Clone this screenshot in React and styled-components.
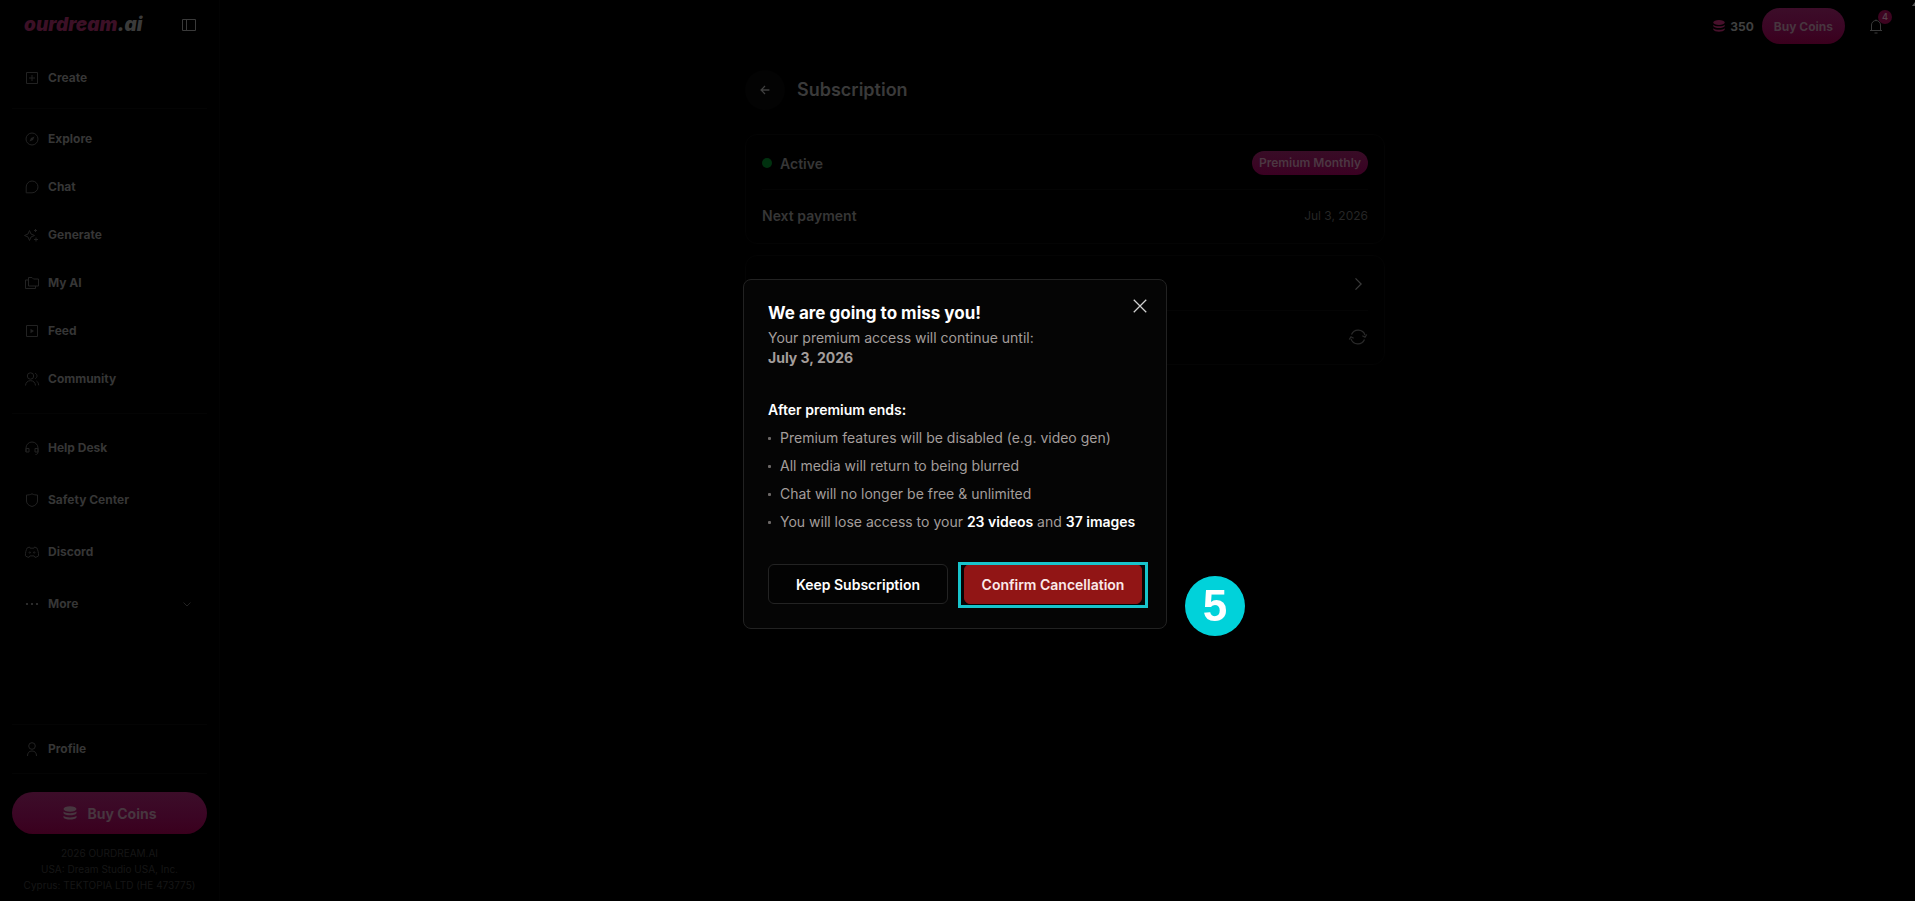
import React from 'react';
import styled, { createGlobalStyle } from 'styled-components';

const GlobalStyle = createGlobalStyle`
  * {
    box-sizing: border-box;
  }

  body {
    margin: 0;
    background: #000;
    color: #363636;
    font-family: Inter, "Liberation Sans", sans-serif;
    font-size: 14px;
  }

  button {
    font-family: inherit;
    cursor: pointer;
  }

  h1, h2, h3, p, ul {
    margin: 0;
    padding: 0;
  }
`;

const Layout = styled.div`
  display: grid;
  grid-template-columns: 220px minmax(0, 1fr);
  min-height: 100vh;
`;

const Sidebar = styled.aside`
  display: flex;
  flex-direction: column;
  padding: 0 12px 8px;
  border-right: 1px solid #030303;
`;

const SidebarHeader = styled.div`
  display: flex;
  align-items: center;
  justify-content: space-between;
  height: 50px;
  padding: 0 10px 0 12px;
  margin-bottom: 8px;
`;

const Logo = styled.a`
  color: #3a3a3a;
  font-size: 19px;
  font-style: italic;
  font-weight: 900;
  line-height: 20px;
  text-decoration: none;

  span {
    color: #3c1026;
  }
`;

const IconButton = styled.button`
  display: flex;
  padding: 0;
  border: 0;
  background: none;
  color: ${(props) => props.$color || '#3a3a3a'};
`;

const NavGroup = styled.nav`
  display: flex;
  flex-direction: column;
  gap: ${(props) => props.$gap || 8}px;
`;

const NavItem = styled.a`
  display: flex;
  align-items: center;
  gap: 8px;
  height: 40px;
  padding: 0 12px;
  color: #363636;
  font-size: 12px;
  font-weight: 700;
  line-height: 16px;
  text-decoration: none;

  svg {
    color: #222;
  }

  svg:last-child {
    margin-left: auto;
  }
`;

const Divider = styled.hr`
  width: 100%;
  height: 1px;
  margin: ${(props) => props.$space || 4}px 0;
  border: 0;
  background: #040404;
`;

const SidebarFooter = styled.div`
  display: flex;
  flex-direction: column;
  margin-top: auto;
`;

const PinkButton = styled.button`
  display: flex;
  align-items: center;
  justify-content: center;
  gap: 9px;
  height: ${(props) => (props.$large ? 42 : 36)}px;
  padding: 0 12px;
  border: 0;
  border-radius: 21px;
  background: linear-gradient(#3c0d29, #3b0524 60%, #3a001d);
  color: #47363f;
  font-size: ${(props) => (props.$large ? 14 : 12)}px;
  font-weight: 700;
`;

const Company = styled.p`
  && {
    margin-top: 11px;
  }
  color: #161616;
  font-size: 10px;
  line-height: 16px;
  text-align: center;
`;

const BuyWrap = styled.div`
  display: grid;
  margin-top: 14px;
`;

const Main = styled.main`
  display: flex;
  flex-direction: column;
  padding-right: 5px;
`;

const TopBar = styled.header`
  display: flex;
  align-items: center;
  justify-content: flex-end;
  height: 52px;
  padding: 0 26px 0 0;
`;

const Balance = styled.div`
  display: flex;
  align-items: center;
  gap: 4px;
  margin-right: 8px;
  color: #404040;
  font-size: 12px;
  font-weight: 700;

  svg {
    color: #47102b;
  }
`;

const BellWrap = styled.div`
  position: relative;
  margin-left: 23px;
`;

const BellCount = styled.span`
  position: absolute;
  top: -8px;
  right: -8px;
  width: 14px;
  height: 14px;
  border-radius: 50%;
  background: #3d0420;
  color: #56404a;
  font-size: 9px;
  font-weight: 600;
  line-height: 14px;
  text-align: center;
`;

const Content = styled.div`
  width: 100%;
  max-width: 640px;
  margin: 18px auto 0;
`;

const PageHeader = styled.div`
  display: flex;
  align-items: center;
  gap: 12px;
  margin-bottom: 24px;
`;

const BackButton = styled.button`
  display: grid;
  place-items: center;
  width: 40px;
  height: 40px;
  border: 0;
  border-radius: 50%;
  background: #030303;
  color: #404040;
`;

const PageTitle = styled.h1`
  color: #3a3a3a;
  font-size: 18px;
  font-weight: 600;
  line-height: 24px;
`;

const Card = styled.section`
  margin-bottom: 11px;
  padding: 2px 16px;
  border: 1px solid #040404;
  border-radius: 12px;
`;

const Row = styled.div`
  display: flex;
  align-items: center;
  gap: 8px;
  height: 52px;
  color: #363636;
  font-weight: 600;

  & + & {
    border-top: 1px solid #040404;
  }

  > :last-child {
    margin-left: auto;
  }
`;

const StatusDot = styled.span`
  width: 10px;
  height: 10px;
  border-radius: 50%;
  background: #00310f;
`;

const Badge = styled.span`
  padding: 0 7px;
  border-radius: 12px;
  background: linear-gradient(#380c26, #3a0022);
  color: #4c3742;
  font-size: 12px;
  font-weight: 600;
  line-height: 24px;
`;

const RowValue = styled.span`
  color: #262626;
  font-size: 12px;
  font-weight: 400;
`;

const Overlay = styled.div`
  position: fixed;
  inset: 0;
  display: grid;
  place-items: center;
  padding: 7px 5px 0 0;
`;

const Dialog = styled.div`
  position: relative;
  width: 424px;
  padding: 24px;
  border: 1px solid #222;
  border-radius: 8px;
  background: #050505;
  color: #a39d9b;
  line-height: 20px;
`;

const DialogTitle = styled.h2`
  margin-bottom: 6px;
  color: #fff;
  font-size: 17px;
  font-weight: 700;
  line-height: 18px;
`;

const CloseButton = styled(IconButton)`
  position: absolute;
  top: 16px;
  right: 16px;
`;

const ListTitle = styled.h3`
  && {
    margin: 32px 0 8px;
  }
  color: #fff;
  font-size: 14px;
  font-weight: 600;
`;

const Consequences = styled.ul`
  display: flex;
  flex-direction: column;
  gap: 8px;
  list-style: none;
`;

const Consequence = styled.li`
  display: flex;
  align-items: center;
  gap: 9px;

  &::before {
    content: "";
    width: 3px;
    height: 3px;
    border-radius: 1px;
    background: #6b6766;
  }

  strong {
    color: #fff;
    font-weight: 600;
  }
`;

const Actions = styled.div`
  display: grid;
  grid-template-columns: 1fr 1fr;
  gap: 14px;
  margin-top: 32px;
`;

const ActionButton = styled.button`
  width: 100%;
  height: 40px;
  padding: 0;
  border: 1px solid ${(props) => (props.$danger ? '#911515' : '#232323')};
  border-radius: 6px;
  background: ${(props) => (props.$danger ? '#911515' : '#030303')};
  color: ${(props) => (props.$danger ? '#fbe9e9' : '#fff')};
  font-size: 14px;
  font-weight: 600;
`;

const Highlight = styled.div`
  position: relative;
  padding-left: 2px;

  &::after {
    content: "";
    position: absolute;
    inset: -2px -6px -4px -4px;
    border: 3px solid #18c4cc;
    pointer-events: none;
  }
`;

const StepMarker = styled.span`
  position: absolute;
  top: 296px;
  left: calc(100% + 19px);
  width: 60px;
  height: 60px;
  border-radius: 50%;
  background: #00d2da;
  color: #fff;
  font-family: "Liberation Sans", sans-serif;
  font-size: 44px;
  font-weight: 700;
  line-height: 60px;
  text-align: center;
`;

const ScrollArrow = styled.span`
  position: fixed;
  top: 2px;
  right: -3px;
  border: 3px solid transparent;
  border-top: 0;
  border-bottom: 4px solid #555;
`;

const paths = {
  create: <path d="M2.5 2.5h11v11h-11zM8 5v6M5 8h6" />,
  explore: (
    <>
      <circle cx="8" cy="8" r="6" />
      <path d="M10.500 5.500 9 9 5.500 10.500 7 7z" fill="currentColor" strokeWidth="0" />
    </>
  ),
  chat: <path d="M2.2 13.8V8A5.9 5.9 0 1 1 8 13.8z" />,
  generate: (
    <path d="M5.500 3.500 7 7l3.500 1.500L7 10l-1.500 3.500L4 10 .5 8.500 4 7zM11.500 2v3M10 3.500h3M12 10.500v4M10 12.500h4" />
  ),
  myai: <path d="M4.500 2.500H8L9.500 4h5v7h-10zM4.500 5h-3v8.500h10V11" />,
  feed: (
    <>
      <path d="M2.500 2.500h11v11h-11z" />
      <path d="M6.500 5.800v4.400L10 8z" fill="currentColor" strokeWidth="0" />
    </>
  ),
  community: (
    <>
      <circle cx="6.500" cy="5" r="3.200" />
      <path d="M1.500 14.500c.3-3 2-4.800 5-4.800s4.700 1.800 5 4.800M11 2.200c2.600.8 2.600 4.300.3 5.500M12.500 10c1.300.8 2 2.200 2.200 4.300" />
    </>
  ),
  help: (
    <path d="M2 12V8a6 6 0 0 1 12 0v4M2 8.500h3V12H2zM11 8.500h3V12h-3zM14 12c0 1.500-.8 2.500-2.500 2.500" />
  ),
  shield: <path d="M8 1.800c1.800 1 3.500 1.200 5.500 1.200v6c0 2.800-2.300 4.600-5.500 5.500C4.800 13.600 2.500 11.800 2.500 9V3C4.500 3 6.200 2.800 8 1.800z" />,
  discord: (
    <>
      <path d="M5.500 3 3.200 3.900C2 6 1.400 8.800 1.400 11.800c1 .9 2.300 1.400 3.600 1.600l.9-1.500h4.200l.9 1.500c1.300-.2 2.600-.7 3.600-1.600 0-3-.6-5.800-1.800-7.900L10.500 3l-.6 1.200H6.100z" />
      <circle cx="5.800" cy="8.500" r=".7" />
      <circle cx="10.200" cy="8.500" r=".7" />
    </>
  ),
  more: (
    <g fill="#363636" stroke="none">
      <circle cx="3" cy="8" r="1.100" />
      <circle cx="8" cy="8" r="1.100" />
      <circle cx="13" cy="8" r="1.100" />
    </g>
  ),
  profile: (
    <>
      <circle cx="8" cy="5" r="3.300" />
      <path d="M3.500 15c0-3.200 1.500-5 4.500-5s4.500 1.800 4.500 5" />
    </>
  ),
  panel: <path d="M1.500 2.500h13v11h-13zM5.500 2.500v11" />,
  down: <path d="m4.500 6.500 3.500 3.500 3.500-3.500" />,
  right: <path d="m6 3.500 4.500 4.500L6 12.500" />,
  back: <path d="M13 8H3.500M8 3.500 3.500 8 8 12.500" />,
  close: <path d="m3 3 10 10M13 3 3 13" />,
  refresh: (
    <path d="M2.800 6A5.800 5.800 0 0 1 13.600 6.500M15 6l-1.400 2.200L11.500 7M13.200 10A5.800 5.800 0 0 1 2.400 9.500M1 10l1.400-2.200L4.500 9" />
  ),
  bell: <path d="M2 12.500h12M3.500 12.500V7a4.500 4.500 0 0 1 9 0v5.500M8 2.500v-1M6.500 15h3" />,
  coins: (
    <g fill="currentColor" stroke="none">
      <ellipse cx="8" cy="4" rx="6.500" ry="2.800" />
      <path d="M1.500 6.500c2 2.300 11 2.300 13 0v1.700c-1.500 2.700-11.500 2.700-13 0zM1.500 10.700c2 2.300 11 2.300 13 0v1.700c-1.500 2.800-11.500 2.800-13 0z" />
    </g>
  ),
};

function Icon({ name, size = 16, width = 1 }) {
  return (
    <svg
      width={size}
      height={size}
      viewBox="0 0 16 16"
      fill="none"
      stroke="currentColor"
      strokeWidth={width}
      aria-hidden="true"
    >
      {paths[name]}
    </svg>
  );
}

const mainLinks = [
  ['explore', 'Explore'],
  ['chat', 'Chat'],
  ['generate', 'Generate'],
  ['myai', 'My AI'],
  ['feed', 'Feed'],
  ['community', 'Community'],
];

const helpLinks = [
  ['help', 'Help Desk'],
  ['shield', 'Safety Center'],
  ['discord', 'Discord'],
];

function NavLink({ icon, label, children }) {
  return (
    <NavItem href="#">
      <Icon name={icon} />
      <span>{label}</span>
      {children}
    </NavItem>
  );
}

function App() {
  return (
    <>
      <GlobalStyle />
      <Layout>
        <Sidebar>
          <SidebarHeader>
            <Logo href="#"><span>ourdream</span>.ai</Logo>
            <IconButton aria-label="Collapse sidebar"><Icon name="panel" /></IconButton>
          </SidebarHeader>
          <NavGroup>
            <NavLink icon="create" label="Create" />
          </NavGroup>
          <Divider $space={10} />
          <NavGroup>
            {mainLinks.map(([icon, label]) => (
              <NavLink key={icon} icon={icon} label={label} />
            ))}
          </NavGroup>
          <Divider $space={14} />
          <NavGroup $gap={12}>
            {helpLinks.map(([icon, label]) => (
              <NavLink key={icon} icon={icon} label={label} />
            ))}
            <NavLink icon="more" label="More"><Icon name="down" /></NavLink>
          </NavGroup>
          <SidebarFooter>
            <Divider />
            <NavLink icon="profile" label="Profile" />
            <Divider />
            <BuyWrap>
              <PinkButton $large><Icon name="coins" />Buy Coins</PinkButton>
            </BuyWrap>
            <Company>
              2026 OURDREAM.AI<br />
              USA: Dream Studio USA, Inc.<br />
              Cyprus: TEKTOPIA LTD (HE 473775)
            </Company>
          </SidebarFooter>
        </Sidebar>

        <Main>
          <TopBar>
            <Balance><Icon name="coins" size={14} />350</Balance>
            <PinkButton>Buy Coins</PinkButton>
            <BellWrap>
              <IconButton aria-label="Notifications"><Icon name="bell" /></IconButton>
              <BellCount>4</BellCount>
            </BellWrap>
          </TopBar>
          <Content>
            <PageHeader>
              <BackButton aria-label="Back"><Icon name="back" size={14} width={1.5} /></BackButton>
              <PageTitle>Subscription</PageTitle>
            </PageHeader>
            <Card>
              <Row><StatusDot />Active<Badge>Premium Monthly</Badge></Row>
              <Row>Next payment<RowValue>Jul 3, 2026</RowValue></Row>
            </Card>
            <Card>
              <Row>
                Coin History
                <IconButton aria-label="Open coin history"><Icon name="right" size={20} /></IconButton>
              </Row>
              <Row>
                <IconButton aria-label="Refresh subscription" $color="#2a2a2a"><Icon name="refresh" size={20} /></IconButton>
              </Row>
            </Card>
          </Content>
        </Main>
      </Layout>
      <ScrollArrow />

      <Overlay>
        <Dialog role="dialog" aria-modal="true" aria-labelledby="dialog-title">
          <DialogTitle id="dialog-title">We are going to miss you!</DialogTitle>
          <p>Your premium access will continue until:</p>
          <p><strong>July 3, 2026</strong></p>
          <ListTitle>After premium ends:</ListTitle>
          <Consequences>
            <Consequence>Premium features will be disabled (e.g. video gen)</Consequence>
            <Consequence>All media will return to being blurred</Consequence>
            <Consequence>Chat will no longer be free &amp; unlimited</Consequence>
            <Consequence>
              <span>You will lose access to your <strong>23 videos</strong> and <strong>37 images</strong></span>
            </Consequence>
          </Consequences>
          <Actions>
            <ActionButton>Keep Subscription</ActionButton>
            <Highlight>
              <ActionButton $danger>Confirm Cancellation</ActionButton>
            </Highlight>
          </Actions>
          <CloseButton aria-label="Close" $color="#d0d0d0"><Icon name="close" size={20} /></CloseButton>
          <StepMarker>5</StepMarker>
        </Dialog>
      </Overlay>
    </>
  );
}

export default App;
